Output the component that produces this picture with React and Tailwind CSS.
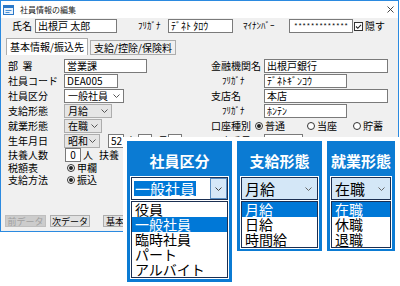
import React from "react";

// Small chevron used by the combo boxes
function Chevron({ className = "" }) {
  return (
    <svg width="7" height="4" viewBox="0 0 7 4" className={className}>
      <path d="M0.5 0.5 L3.5 3.5 L6.5 0.5" fill="none" stroke="currentColor" strokeWidth="1" />
    </svg>
  );
}

function Field({ className = "", children }) {
  return (
    <div
      className={`h-[14px] shrink-0 border border-[#7a7a7a] bg-white flex items-center px-[2px] text-[10px] leading-none whitespace-nowrap overflow-hidden ${className}`}
    >
      {children}
    </div>
  );
}

function Combo({ className = "", white = false, children }) {
  return (
    <div
      className={`h-[14px] shrink-0 border flex items-center justify-between pl-[3px] pr-[3px] text-[10px] leading-none ${
        white ? "border-[#7a7a7a] bg-white" : "border-[#adadad] bg-[#e5e5e5]"
      } ${className}`}
    >
      <span>{children}</span>
      <Chevron className="text-[#555]" />
    </div>
  );
}

function Radio({ on }) {
  return (
    <span className="w-[8px] h-[8px] shrink-0 rounded-full border border-[#333] bg-white flex items-center justify-center">
      {on && <span className="w-[4px] h-[4px] rounded-full bg-[#222]" />}
    </span>
  );
}

function Row({ label, labelClass = "w-[56px]", className = "h-[15px]", children }) {
  return (
    <div className={`flex items-center text-[10px] leading-none whitespace-pre ${className}`}>
      <span className={`shrink-0 ${labelClass}`}>{label}</span>
      {children}
    </div>
  );
}

function Window() {
  return (
    <div className="w-[399px] h-[232px] border border-[#2b8ae0] bg-[#f0f0f0] flex flex-col">
      {/* title bar */}
      <div className="h-[17px] shrink-0 bg-white flex items-center pl-[2px] pr-[4px]">
        <svg width="11" height="10" viewBox="0 0 11 10">
          <rect x="0.5" y="0.5" width="10" height="9" fill="#e8f2fc" stroke="#2a78c8" />
          <rect x="0.5" y="0.5" width="10" height="2.5" fill="#2a78c8" />
          <path d="M2.5 5.5h6M2.5 7.5h4" stroke="#4a90d6" />
        </svg>
        <span className="ml-[6px] text-[8px] leading-none text-[#222]">社員情報の編集</span>
        <svg width="7" height="7" viewBox="0 0 7 7" className="ml-auto">
          <path d="M0.5 0.5 L6.5 6.5 M6.5 0.5 L0.5 6.5" stroke="#333" strokeWidth="0.9" />
        </svg>
      </div>

      {/* name row */}
      <div className="h-[16px] shrink-0 pt-[1px] flex items-start text-[10px] leading-[14px]">
        <span className="ml-[11px] w-[23px] shrink-0">氏名</span>
        <Field className="w-[82px]">出根戸 太郎</Field>
        <span className="ml-[21px] w-[30px] shrink-0 text-[9px]">ﾌﾘｶﾞﾅ</span>
        <Field className="w-[65px] text-[9px]">ﾃﾞﾈﾄ ﾀﾛｳ</Field>
        <span className="ml-[10px] w-[46px] shrink-0 text-[9px]">ﾏｲﾅﾝﾊﾞｰ</span>
        <div className="h-[14px] w-[64px] shrink-0 border border-[#7a7a7a] bg-white flex items-center justify-center font-['Liberation_Mono',monospace] text-[7px] leading-none">
          *************
        </div>
        <svg width="9" height="9" viewBox="0 0 9 9" className="ml-[1px] mt-[3px] shrink-0">
          <rect x="0.5" y="0.5" width="8" height="8" fill="white" stroke="#333" />
          <path d="M2 4.5 L3.8 6.3 L7 2.8" fill="none" stroke="#222" strokeWidth="1.1" />
        </svg>
        <span className="ml-[2px]">隠す</span>
      </div>

      {/* tabs */}
      <div className="mt-[4px] h-[17px] shrink-0 flex items-end pl-[5px] text-[10px] leading-none">
        <div className="h-[17px] w-[82px] bg-white border border-b-0 border-[#adadad] flex items-center justify-center">
          基本情報/振込先
        </div>
        <div className="ml-[2px] h-[15px] w-[86px] border border-[#adadad] bg-[#f0f0f0] flex items-center justify-center">
          支給/控除/保険料
        </div>
      </div>

      {/* tab content */}
      <div className="mt-[3px] flex">
        <div className="w-[210px] shrink-0 pl-[7px] flex flex-col">
          <Row label="部  署">
            <Field className="w-[83px]">営業課</Field>
          </Row>
          <Row label="社員コード">
            <Field className="w-[54px]">DEA005</Field>
          </Row>
          <Row label="社員区分">
            <Combo white className="w-[60px]">一般社員</Combo>
          </Row>
          <Row label="支給形態">
            <Combo className="w-[48px]">月給</Combo>
          </Row>
          <Row label="就業形態">
            <Combo className="w-[38px]">在職</Combo>
          </Row>
          <Row label="生年月日">
            <Combo className="w-[36px]">昭和</Combo>
            <Field className="ml-[8px] w-[16px] px-[1px]">52</Field>
            <span className="ml-[4px] w-[10px]">年</span>
            <Field className="w-[14px] px-[1px]">10</Field>
            <span className="ml-[6px] w-[10px]">月</span>
            <Field className="w-[14px] px-[1px]">10</Field>
            <span className="ml-[6px]">日</span>
          </Row>
          <Row label="扶養人数" className="h-[14px]">
            <Field className="ml-[1px] w-[16px] justify-center">0</Field>
            <span className="ml-[2px] w-[16px]">人</span>
            <span>扶養</span>
          </Row>
          <div className="h-[12px] flex items-center text-[10px] leading-none">
            <span className="w-[59px] shrink-0">税額表</span>
            <Radio on />
            <span className="ml-[2px]">甲欄</span>
          </div>
          <div className="h-[12px] flex items-center text-[10px] leading-none">
            <span className="w-[59px] shrink-0">支給方法</span>
            <Radio on />
            <span className="ml-[2px]">振込</span>
          </div>
        </div>

        <div className="flex flex-col">
          <Row label="金融機関名" labelClass="w-[53px]">
            <Field className="w-[124px]">出根戸銀行</Field>
          </Row>
          <Row label="ﾌﾘｶﾞﾅ" labelClass="w-[53px] pl-[11px] text-[9px]">
            <Field className="w-[83px] text-[9px]">ﾃﾞﾈﾄｷﾞﾝｺｳ</Field>
          </Row>
          <Row label="支店名" labelClass="w-[53px]">
            <Field className="w-[124px]">本店</Field>
          </Row>
          <Row label="ﾌﾘｶﾞﾅ" labelClass="w-[53px] pl-[11px] text-[9px]">
            <Field className="w-[83px] text-[9px]">ﾎﾝﾃﾝ</Field>
          </Row>
          <Row label="口座種別" labelClass="w-[44px]">
            <span className="w-[52px] flex items-center">
              <Radio on />
              <span className="ml-[2px]">普通</span>
            </span>
            <span className="w-[46px] flex items-center">
              <Radio />
              <span className="ml-[2px]">当座</span>
            </span>
            <span className="flex items-center">
              <Radio />
              <span className="ml-[2px]">貯蓄</span>
            </span>
          </Row>
          <Row label="口座番号" labelClass="w-[53px]">
            <Field className="w-[39px] px-[1px] text-[8.5px] tracking-[-0.2px]">1235464</Field>
          </Row>
        </div>
      </div>

      {/* bottom buttons */}
      <div className="mt-auto mb-[4px] pl-[4px] flex text-[9px] leading-none">
        <div className="h-[12px] w-[41px] border border-[#bfbfbf] bg-[#cccccc] text-[#a0a0a0] flex items-center justify-center">
          前データ
        </div>
        <div className="ml-[4px] h-[12px] w-[40px] border border-[#adadad] bg-[#e1e1e1] flex items-center justify-center">
          次データ
        </div>
        <div className="ml-[13px] h-[12px] w-[40px] border border-[#adadad] bg-[#e1e1e1] flex items-center pl-[2px] overflow-hidden">
          基本
        </div>
      </div>
    </div>
  );
}

function ListItem({ active, children }) {
  return (
    <div
      className={`h-[15px] text-[14px] leading-[15px] pl-[3px] whitespace-nowrap ${
        active ? "bg-[#0078d7] text-white" : "text-black"
      }`}
    >
      {children}
    </div>
  );
}

function Panel({ className, title, select, items }) {
  return (
    <div className={`shrink-0 bg-[#0b7bd3] px-[4px] flex flex-col ${className}`}>
      <div className="-mx-[4px] h-[36px] pt-[12px] text-center text-white font-bold text-[15px] leading-[16px] whitespace-nowrap">
        {title}
      </div>
      {select}
      <div className="mt-[1px] border border-[#1b2f52] ring-1 ring-white bg-white flex flex-col">
        {items.map((it) => (
          <ListItem key={it.label} active={it.active}>
            {it.label}
          </ListItem>
        ))}
      </div>
    </div>
  );
}

function Overlay() {
  return (
    <div className="absolute left-[123px] top-[137px] right-0 bottom-0 bg-white p-[4px] flex items-start gap-[5px]">
      <Panel
        className="w-[105px] h-[141px]"
        title="社員区分"
        select={
          <div className="h-[23px] border border-[#1b2f52] ring-1 ring-white bg-white flex items-center">
            <span className="ml-[2px] px-[1px] bg-[#0078d7] text-white text-[15px] leading-[15px]">一般社員</span>
            <span className="ml-auto h-full w-[17px] border border-[#5a8fc4] bg-[#d6e8f8] flex items-center justify-center">
              <Chevron className="text-[#444]" />
            </span>
          </div>
        }
        items={[
          { label: "役員" },
          { label: "一般社員", active: true },
          { label: "臨時社員" },
          { label: "パート" },
          { label: "アルバイト" },
        ]}
      />
      <Panel
        className="w-[85px] h-[110px]"
        title="支給形態"
        select={
          <div className="h-[23px] border border-[#1b2f52] ring-1 ring-white bg-[#d4e7f7] flex items-center justify-between pl-[3px] pr-[5px]">
            <span className="text-[15px] leading-[15px]">月給</span>
            <Chevron className="text-[#666]" />
          </div>
        }
        items={[{ label: "月給", active: true }, { label: "日給" }, { label: "時間給" }]}
      />
      <Panel
        className="w-[68px] h-[110px]"
        title="就業形態"
        select={
          <div className="h-[23px] border border-[#1b2f52] ring-1 ring-white bg-[#d4e7f7] flex items-center justify-between pl-[3px] pr-[5px]">
            <span className="text-[15px] leading-[15px]">在職</span>
            <Chevron className="text-[#666]" />
          </div>
        }
        items={[{ label: "在職", active: true }, { label: "休職" }, { label: "退職" }]}
      />
    </div>
  );
}

export default function App() {
  return (
    <div className="relative w-[400px] h-[286px] overflow-hidden bg-white text-black font-['Noto_Sans_CJK_JP',sans-serif]">
      <Window />
      <Overlay />
    </div>
  );
}
